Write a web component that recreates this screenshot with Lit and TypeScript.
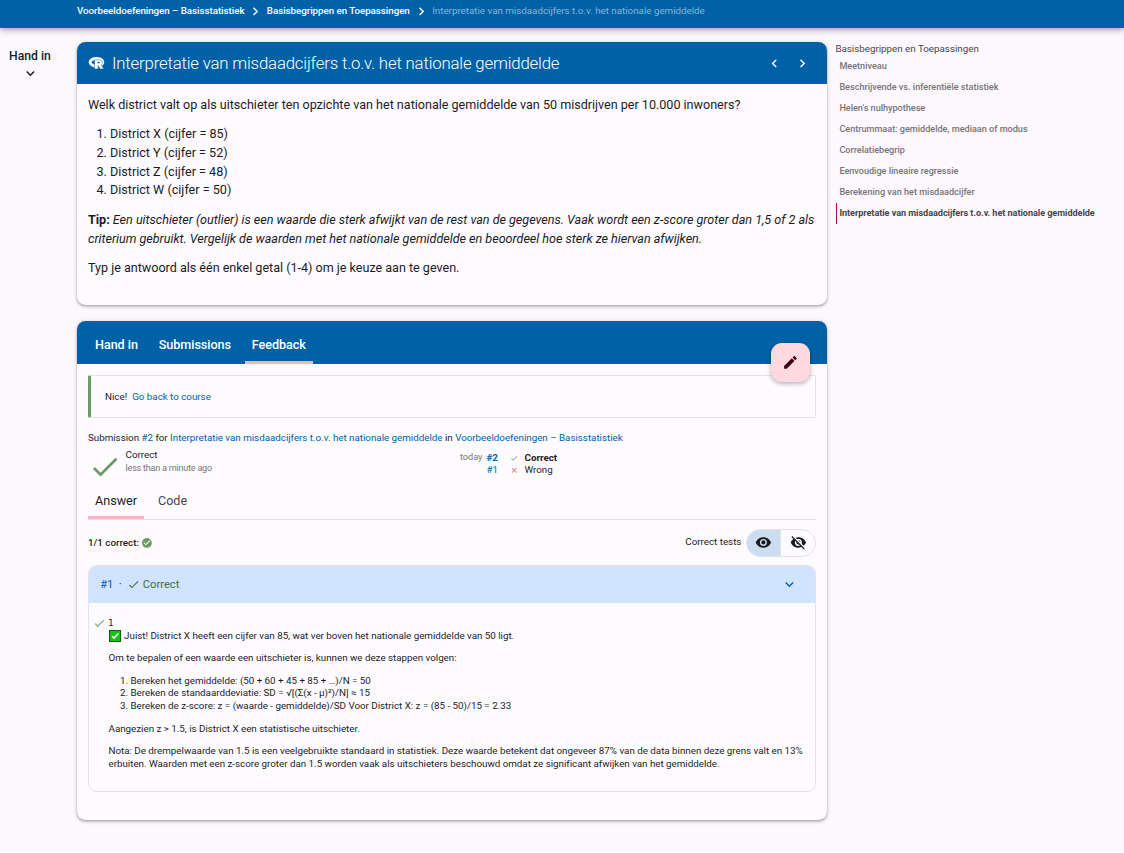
import { LitElement, html, css, svg } from "lit";
import { customElement, property } from "lit/decorators.js";

const ICONS: Record<string, string> = {
  down: "M7.41,8.58L12,13.17L16.59,8.58L18,10L12,16L6,10L7.41,8.58Z",
  right: "M8.59,16.58L13.17,12L8.59,7.41L10,6L16,12L10,18L8.59,16.58Z",
  left: "M15.41,16.58L10.83,12L15.41,7.41L14,6L8,12L14,18L15.41,16.58Z",
  check: "M21,7L9,19L3.5,13.5L4.91,12.09L9,16.17L19.59,5.59L21,7Z",
  close: "M19,6.41L17.59,5L12,10.59L6.41,5L5,6.41L10.59,12L5,17.59L6.41,19L12,13.41L17.59,19L19,17.59L13.41,12L19,6.41Z",
  pencil: "M20.71,7.04C21.1,6.65 21.1,6 20.71,5.63L18.37,3.29C18,2.9 17.35,2.9 16.96,3.29L15.12,5.12L18.87,8.87M3,17.25V21H6.75L17.81,9.93L14.06,6.18L3,17.25Z",
  circle: "M12 2C6.5 2 2 6.5 2 12S6.5 22 12 22 22 17.5 22 12 17.5 2 12 2M10 17L5 12L6.41 10.59L10 14.17L17.59 6.58L19 8L10 17Z",
  eye: "M12,9A3,3 0 0,0 9,12A3,3 0 0,0 12,15A3,3 0 0,0 15,12A3,3 0 0,0 12,9M12,17A5,5 0 0,1 7,12A5,5 0 0,1 12,7A5,5 0 0,1 17,12A5,5 0 0,1 12,17M12,4.5C7,4.5 2.73,7.61 1,12C2.73,16.39 7,19.5 12,19.5C17,19.5 21.27,16.39 23,12C21.27,7.61 17,4.5 12,4.5Z",
  eyeOff: "M11.83,9L15,12.16C15,12.11 15,12.05 15,12A3,3 0 0,0 12,9C11.94,9 11.89,9 11.83,9M7.53,9.8L9.08,11.35C9.03,11.56 9,11.77 9,12A3,3 0 0,0 12,15C12.22,15 12.44,14.97 12.65,14.92L14.2,16.47C13.53,16.8 12.79,17 12,17A5,5 0 0,1 7,12C7,11.21 7.2,10.47 7.53,9.8M2,4.27L4.28,6.55L4.73,7C3.08,8.3 1.78,10 1,12C2.73,16.39 7,19.5 12,19.5C13.55,19.5 15.03,19.2 16.38,18.66L16.81,19.08L19.73,22L21,20.73L3.27,3M12,7A5,5 0 0,1 17,12C17,12.64 16.87,13.26 16.64,13.82L19.57,16.75C21.07,15.5 22.27,13.86 23,12C21.27,7.61 17,4.5 12,4.5C10.6,4.5 9.26,4.75 8,5.2L10.17,7.35C10.74,7.13 11.35,7 12,7Z",
};

@customElement("ui-icon")
class UiIcon extends LitElement {
  @property() name = "check";
  static styles = css`
    :host { display: block; flex: none; width: 16.8px; height: 16.8px; }
    svg { display: block; width: 100%; height: 100%; fill: currentColor; }
  `;
  render() {
    return html`<svg viewBox="0 0 24 24">${svg`<path d=${ICONS[this.name]}></path>`}</svg>`;
  }
}

const COURSE = "Voorbeeldoefeningen – Basisstatistiek";
const SERIES = "Basisbegrippen en Toepassingen";
const TITLE = "Interpretatie van misdaadcijfers t.o.v. het nationale gemiddelde";
const ACTIVITIES = [
  "Meetniveau",
  "Beschrijvende vs. inferentiële statistiek",
  "Helen's nulhypothese",
  "Centrummaat: gemiddelde, mediaan of modus",
  "Correlatiebegrip",
  "Eenvoudige lineaire regressie",
  "Berekening van het misdaadcijfer",
];

@customElement("app-root")
class AppRoot extends LitElement {
  static styles = css`
    :host {
      display: block; height: 852px; box-sizing: border-box; overflow: hidden;
      background: #fdf8fd; color: #1b1b1f;
      font: 400 9.8px/12.6px Roboto, sans-serif; letter-spacing: -.012px;
    }
    p, ol, h2 { margin: 0; }
    a { color: #0061a6; }
    b { font-weight: 700; }
    .nav {
      display: flex; align-items: center; height: 28px; padding: 0 0 6px 77px; box-sizing: border-box;
      background: #0061a6; color: #fff; font-weight: 500; white-space: nowrap; letter-spacing: -.055px;
      box-shadow: 0 2px 4px -1px rgba(0,0,0,.2), 0 3px 7px rgba(0,0,0,.14), 0 1px 7px rgba(0,0,0,.12);
    }
    .nav ui-icon { margin: 0 2.8px; }
    .nav .here { font-weight: 400; color: #85b5dc; letter-spacing: -.01px; }
    .page { display: grid; grid-template-columns: 60px 767px 297px; padding-top: 14px; }
    .side { display: flex; flex-direction: column; align-items: center; padding-top: 7px; font-size: 12.2px; line-height: 14px; font-weight: 500; letter-spacing: 0; }
    .side ui-icon { margin-top: 2px; }
    .main { padding-left: 17px; }
    .toc { padding-left: 8.4px; color: #46464a; }
    .toc h2 { font-size: 9.8px; line-height: 13px; font-weight: 400; padding-bottom: 1px; letter-spacing: -.01px; }
    .toc div { height: 21px; box-sizing: border-box; line-height: 21px; margin-left: .6px; padding-left: 2.4px; font-size: 9.1px; font-weight: 500; color: #747478; border-left: 1px solid transparent; white-space: nowrap; letter-spacing: -.005px; }
    .toc div.on { font-weight: 700; color: #46464a; border-left-color: #bb0053; letter-spacing: -.045px; }
    .card {
      border-radius: 8.4px; background: #fefbff; position: relative;
      box-shadow: 0 1.4px 2.1px -.7px rgba(0,0,0,.2), 0 1.4px 3.5px rgba(0,0,0,.12), 0 .7px 5px rgba(0,0,0,.1);
    }
    .bar { background: #0061a6; color: #fff; border-radius: 8.4px 8.4px 0 0; display: flex; align-items: center; }
    .one { height: 263px; margin-bottom: 16px; }
    .one .bar { height: 42px; padding: 0 16.5px 0 11px; }
    .one .bar svg { width: 17px; height: 17px; flex: none; margin-right: 7px; }
    .one h2 { font-size: 16.8px; font-weight: 300; line-height: 20px; flex: 1; white-space: nowrap; letter-spacing: -.178px; }
    .one .bar ui-icon { margin-left: 11px; }
    .text { padding: 12.2px 11px; font-size: 12.6px; line-height: 18.75px; letter-spacing: -.018px; }
    .text p, .text ol { margin-bottom: 10.5px; }
    .text ol { padding-left: 22px; letter-spacing: 0; line-height: 18.65px; margin-bottom: 10.9px; }
    .two { height: 499px; }
    .two .bar { height: 43px; padding-left: 11px; align-items: stretch; font-size: 12.6px; }
    .tab { padding: 0 7px; line-height: 47px; box-sizing: border-box; font-weight: 500; margin-right: 6.8px; height: 43px; letter-spacing: -.04px; }
    .tab.on { border-bottom: 3px solid #ffb1c1; }
    .fab {
      position: absolute; left: 694px; top: 22px; width: 39px; height: 39px; border-radius: 11px;
      background: #ffd9df; color: #3f0017; display: grid; place-items: center;
      box-shadow: 0 2px 4px rgba(0,0,0,.2), 0 1px 5px rgba(0,0,0,.12);
    }
    .body { padding: 11px; }
    .nice { height: 43px; box-sizing: border-box; border: 1px solid #e4e1e6; border-left: 3px solid #6e9a66; border-radius: 2px; padding-left: 14px; line-height: 42px; }
    .nice a { margin-left: 2.6px; }
    .sub { margin-top: 14px; letter-spacing: -.014px; }
    .status { display: grid; grid-template-columns: 372px auto; margin-top: 4px; height: 36px; }
    .res { display: flex; }
    .res ui-icon { width: 33.6px; height: 33.6px; margin-top: 1px; color: #6e9a66; }
    .res .verdict { display: flex; flex-direction: column; margin: -1px 0 0 4px; line-height: 13px; }
    .mut { font-size: 9.1px; color: #77767a; }
    .res .mut { letter-spacing: -.24px; margin-top: 1px; }
    .hist { display: grid; grid-template-columns: 26.5px 23px 15px auto; grid-auto-rows: 12px; line-height: 12px; padding-top: 3px; justify-content: start; }
    .hist .mut { margin-top: -1px; }
    .hist ui-icon { width: 8.4px; height: 8.4px; margin-top: 2.5px; }
    .ok { color: #6e9a66; }
    .bad { color: #f0524a; }
    .tabs { display: flex; height: 34px; border-bottom: 1px solid #e4e1e6; font-size: 12.6px; color: #46464a; }
    .tabs span { padding: 0 7px; margin-right: 7px; height: 34px; box-sizing: border-box; line-height: 31px; }
    .tabs .on { border-bottom: 3px solid #ffb1c1; color: #1b1b1f; }
    .sum { display: flex; align-items: center; height: 28px; margin-top: 9px; font-weight: 500; }
    .sum .count { padding-top: 1px; }
    .sum ui-icon.ok { width: 11.8px; height: 11.8px; margin-left: 2px; }
    .sum .lab { margin-left: auto; margin-right: 4.6px; font-weight: 400; }
    .seg { display: grid; grid-template-columns: 34.4px auto; width: 70px; height: 28px; box-sizing: border-box; border: 1px solid #e4e1e6; border-radius: 14px; overflow: hidden; }
    .seg span { display: grid; place-items: center; }
    .seg .on { background: #cbddee; border-right: 1px solid #e4e1e6; }
    .test { height: 227px; margin-top: 8px; border: 1px solid #e4e1e6; border-radius: 8.4px; overflow: hidden; box-sizing: border-box; }
    .thead { display: flex; align-items: center; height: 37px; background: #d0e4ff; padding: 1px 17px 0 11.2px; box-sizing: border-box; font-size: 11.2px; color: #47703f; }
    .thead a, .thead i, .thead .label { padding-top: 1px; }
    .thead ui-icon { width: 13px; height: 13px; }
    .thead .label { margin-left: 2.8px; }
    .thead i { margin: 0 5.4px; font-style: normal; color: #1b1b1f; }
    .thead ui-icon.end { margin-left: auto; width: 16.8px; height: 16.8px; color: #0061a6; }
    .tbody { padding: 14px 8px 0 4px; display: grid; grid-template-columns: 15.5px auto; }
    .tbody ui-icon { width: 12.6px; height: 12.6px; }
    .mono { font: 9.1px/13px "DejaVu Sans Mono", monospace; margin-left: -.5px; }
    .first { display: flex; align-items: center; }
    .first svg { width: 12px; height: 12px; margin-right: 3.6px; }
    .tbody p, .tbody ol { margin-bottom: 10px; }
    .tbody ol { padding-left: 22px; }
  `;

  render() {
    return html`
      <div class="nav">
        <span>${COURSE}</span><ui-icon name="right"></ui-icon>
        <span>${SERIES}</span><ui-icon name="right"></ui-icon>
        <span class="here">${TITLE}</span>
      </div>
      <div class="page">
        <div class="side">Hand in<ui-icon name="down"></ui-icon></div>
        <div class="main">
          <section class="card one">
            <div class="bar">
              <svg viewBox="0 0 24 24">
                <ellipse cx="12" cy="10.3" rx="9" ry="5.4" fill="none" stroke="#fff" stroke-width="4.2"></ellipse>
                <path d="M9.2 7H17a3.8 3.8 0 0 1 1.7 7L22.3 19.6H17.4L14 14.6V19.6H9.2Z" fill="#fff" stroke="#0061a6" stroke-width=".7"></path>
                <path d="M13.4 9.8h3q1.3 .8 0 1.7h-3z" fill="#0061a6"></path>
              </svg>
              <h2>${TITLE}</h2>
              <ui-icon name="left"></ui-icon><ui-icon name="right"></ui-icon>
            </div>
            <div class="text">
              <p>Welk district valt op als uitschieter ten opzichte van het nationale gemiddelde van 50 misdrijven per 10.000 inwoners?</p>
              <ol>
                <li>District X (cijfer = 85)</li>
                <li>District Y (cijfer = 52)</li>
                <li>District Z (cijfer = 48)</li>
                <li>District W (cijfer = 50)</li>
              </ol>
              <p><b>Tip:</b> <em>Een uitschieter (outlier) is een waarde die sterk afwijkt van de rest van de gegevens. Vaak wordt een z-score groter dan 1,5 of 2 als criterium gebruikt. Vergelijk de waarden met het nationale gemiddelde en beoordeel hoe sterk ze hiervan afwijken.</em></p>
              <p>Typ je antwoord als één enkel getal (1-4) om je keuze aan te geven.</p>
            </div>
          </section>
          <section class="card two">
            <div class="bar">
              <span class="tab">Hand in</span><span class="tab">Submissions</span><span class="tab on">Feedback</span>
            </div>
            <div class="fab"><ui-icon name="pencil"></ui-icon></div>
            <div class="body">
              <div class="nice">Nice! <a>Go back to course</a></div>
              <div class="sub">Submission <a>#2</a> for <a>${TITLE}</a> in <a>${COURSE}</a></div>
              <div class="status">
                <div class="res">
                  <ui-icon name="check"></ui-icon>
                  <div class="verdict"><span>Correct</span><span class="mut">less than a minute ago</span></div>
                </div>
                <div class="hist">
                  <span class="mut">today</span><a><b>#2</b></a><ui-icon class="ok" name="check"></ui-icon><b>Correct</b>
                  <span></span><a>#1</a><ui-icon class="bad" name="close"></ui-icon><span>Wrong</span>
                </div>
              </div>
              <div class="tabs"><span class="on">Answer</span><span>Code</span></div>
              <div class="sum">
                <span class="count">1/1 correct:</span> <ui-icon class="ok" name="circle"></ui-icon>
                <span class="lab">Correct tests</span>
                <div class="seg"><span class="on"><ui-icon name="eye"></ui-icon></span><span><ui-icon name="eyeOff"></ui-icon></span></div>
              </div>
              <div class="test">
                <div class="thead">
                  <a>#1</a><i>·</i><ui-icon name="check"></ui-icon><span class="label">Correct</span>
                  <ui-icon class="end" name="down"></ui-icon>
                </div>
                <div class="tbody">
                  <ui-icon class="ok" name="check"></ui-icon>
                  <div>
                    <div class="mono">1</div>
                    <p class="first">
                      <svg viewBox="0 0 12 12"><rect x=".5" y=".5" width="11" height="11" fill="#12c412" stroke="#075a07"></rect><path d="M3 6l2 2.2L9.2 3.6" fill="none" stroke="#fff" stroke-width="1.5"></path></svg>
                      Juist! District X heeft een cijfer van 85, wat ver boven het nationale gemiddelde van 50 ligt.
                    </p>
                    <p>Om te bepalen of een waarde een uitschieter is, kunnen we deze stappen volgen:</p>
                    <ol>
                      <li>Bereken het gemiddelde: (50 + 60 + 45 + 85 + …)/N = 50</li>
                      <li>Bereken de standaarddeviatie: SD = √[(Σ(x - μ)²)/N] ≈ 15</li>
                      <li>Bereken de z-score: z = (waarde - gemiddelde)/SD Voor District X: z = (85 - 50)/15 = 2.33</li>
                    </ol>
                    <p>Aangezien z &gt; 1.5, is District X een statistische uitschieter.</p>
                    <p>Nota: De drempelwaarde van 1.5 is een veelgebruikte standaard in statistiek. Deze waarde betekent dat ongeveer 87% van de data binnen deze grens valt en 13% erbuiten. Waarden met een z-score groter dan 1.5 worden vaak als uitschieters beschouwd omdat ze significant afwijken van het gemiddelde.</p>
                  </div>
                </div>
              </div>
            </div>
          </section>
        </div>
        <div class="toc">
          <h2>${SERIES}</h2>
          ${ACTIVITIES.map((a) => html`<div>${a}</div>`)}
          <div class="on">${TITLE}</div>
        </div>
      </div>
    `;
  }
}
